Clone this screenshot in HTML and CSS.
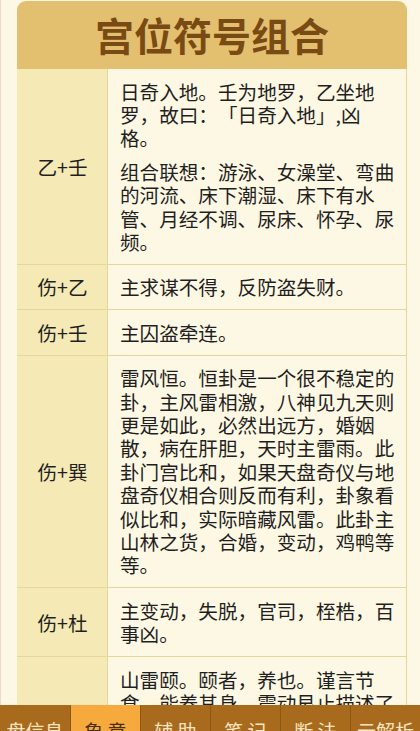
FILE: index.html
```html
<!DOCTYPE html>
<html lang="zh-CN">
<head>
<meta charset="utf-8">
<title>宫位符号组合</title>
<link rel="stylesheet" href="styles.css">
</head>
<body>
<div class="page">
  <div class="card">
    <div class="card-head">宫位符号组合</div>
    <table class="combo">
      <tr>
        <td class="key">乙+壬</td>
        <td class="val"><p>日奇入地。壬为地罗，乙坐地罗，故曰：「日奇入地」,凶格。</p><p>组合联想：游泳、女澡堂、弯曲的河流、床下潮湿、床下有水管、月经不调、尿床、怀孕、尿频。</p></td>
      </tr>
      <tr>
        <td class="key">伤+乙</td>
        <td class="val"><p>主求谋不得，反防盗失财。</p></td>
      </tr>
      <tr>
        <td class="key">伤+壬</td>
        <td class="val"><p>主囚盗牵连。</p></td>
      </tr>
      <tr>
        <td class="key">伤+巽</td>
        <td class="val"><p>雷风恒。恒卦是一个很不稳定的卦，主风雷相激，八神见九天则更是如此，必然出远方，婚姻散，病在肝胆，天时主雷雨。此卦门宫比和，如果天盘奇仪与地盘奇仪相合则反而有利，卦象看似比和，实际暗藏风雷。此卦主山林之货，合婚，变动，鸡鸭等等。</p></td>
      </tr>
      <tr>
        <td class="key">伤+杜</td>
        <td class="val"><p>主变动，失脱，官司，桎梏，百事凶。</p></td>
      </tr>
      <tr>
        <td class="key">伤+艮</td>
        <td class="val"><p>山雷颐。颐者，养也。谨言节食，能养其身。震动艮止描述了口腔咀嚼的动作，主饮食、言语、养生之事。</p></td>
      </tr>
    </table>
  </div>
</div>
<nav class="tabbar">
  <div class="tab">盘信息</div>
  <div class="tab active">象 意</div>
  <div class="tab">辅 助</div>
  <div class="tab">笔 记</div>
  <div class="tab">断 法</div>
  <div class="tab">云解析</div>
</nav>
</body>
</html>
```
FILE: styles.css
```css
html, body {
  margin: 0;
  padding: 0;
}
body {
  background: #fdf8e6;
  border-left: 1px solid #f2d6d4;
  font-family: "Noto Sans CJK SC", "Noto Sans", sans-serif;
  color: #1f1f1f;
  text-spacing-trim: space-all;
}
.page {
  padding: 1px 13px 40px 16px;
}
.card {
  width: 390px;
}
.card-head {
  height: 68px;
  background: #e2c06f;
  border-radius: 9px 9px 0 0;
  color: #7a4a14;
  font-size: 39px;
  font-weight: 700;
  line-height: 66px;
  text-align: center;
  letter-spacing: 0;
}
.combo {
  width: 390px;
  border-collapse: collapse;
  table-layout: fixed;
}
.combo td {
  border-top: 1px solid #e8d59b;
  border-bottom: 1px solid #e8d59b;
  font-size: 19.6px;
  line-height: 23.4px;
  vertical-align: middle;
}
.combo tr:first-child td {
  border-top: none;
}
.key {
  width: 89px;
  background: #f5eab6;
  border-right: 1px solid #e8d59b;
  text-align: center;
  padding: 0 0 0 1px;
}
.val {
  background: #fdf8e4;
  border-right: 1px solid #e8d59b;
  padding: 10.5px 8px 10.5px 12px;
}
.val p {
  margin: 0;
}
.val p + p {
  margin-top: 10px;
}
.tabbar {
  position: fixed;
  left: 0;
  right: 0;
  bottom: -24px;
  height: 50px;
  display: grid;
  grid-template-columns: repeat(6, 1fr);
  background: #a86b1e;
}
.tab {
  display: flex;
  align-items: center;
  justify-content: center;
  color: #fbe6c2;
  font-size: 19px;
  border-left: 1px solid #8d5714;
}
.tab:first-child {
  border-left: none;
}
.tab.active {
  background: #f6a93c;
  color: #4a2e0c;
}
```
